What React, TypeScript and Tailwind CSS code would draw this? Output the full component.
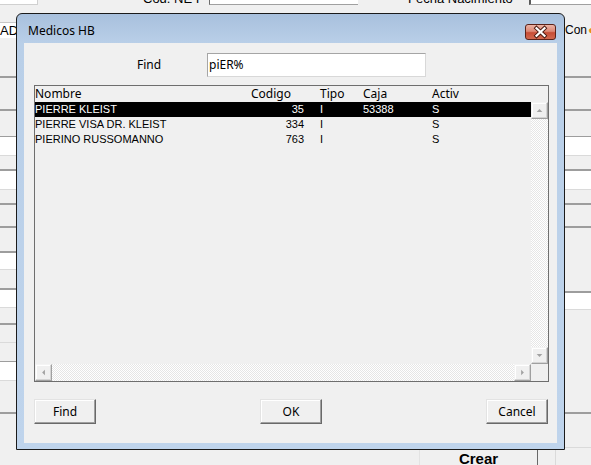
import React from "react";

type Seg = [string, number];

const segClass: Record<string, string> = {
  g: "bg-[#f0f0f0]",
  d: "bg-[#9d9d9d]",
  l: "bg-[#dadada]",
  w: "bg-white",
};

const leftSegs: Seg[] = [
  ["g", 38], ["d", 2], ["g", 31], ["d", 2], ["g", 25], ["d", 1], ["w", 18], ["l", 1],
  ["g", 13], ["d", 2], ["w", 18], ["l", 1], ["g", 13], ["d", 2], ["g", 21], ["d", 2],
  ["g", 23], ["d", 2], ["w", 16], ["l", 1], ["g", 18], ["d", 2], ["w", 17], ["l", 1],
  ["g", 15], ["d", 2], ["g", 17], ["l", 1], ["g", 18], ["d", 1], ["w", 18], ["l", 1],
  ["g", 31], ["d", 2],
];

const rightSegs: Seg[] = [
  ["g", 38], ["d", 2], ["g", 31], ["d", 2], ["g", 25], ["d", 1], ["w", 18], ["l", 1],
  ["g", 13], ["d", 2], ["w", 18], ["l", 1], ["g", 13], ["d", 2], ["g", 21], ["d", 2],
  ["g", 63], ["d", 2], ["w", 16], ["l", 1], ["g", 102], ["d", 2], ["g", 33], ["l", 1],
];

function Segs({ segs }: { segs: Seg[] }) {
  return (
    <>
      {segs.map(([t, h], i) => (
        <div key={i} className={`shrink-0 ${segClass[t]}`} style={{ height: h }} />
      ))}
    </>
  );
}

function Arrow({ dir }: { dir: "up" | "down" | "left" | "right" }) {
  const pts: Record<string, string> = {
    up: "5,9.5 8,6.5 11,9.5",
    down: "5,6.5 8,9.5 11,6.5",
    left: "9.5,5 6.5,8 9.5,11",
    right: "6.5,5 9.5,8 6.5,11",
  };
  return (
    <div className="w-[17px] h-[17px] shrink-0 bg-[#f0f0f0] border border-t-[#f4f4f4] border-l-[#f4f4f4] border-r-[#a0a0a0] border-b-[#a0a0a0] shadow-[inset_-1px_-1px_0_#d4d4d4,inset_1px_1px_0_#ffffff] flex items-center justify-center">
      <svg width="15" height="15" viewBox="0 0 16 16">
        <polygon points={pts[dir]} fill="#a2a2a2" />
      </svg>
    </div>
  );
}

const track =
  "bg-[image:repeating-conic-gradient(#ffffff_0_25%,#e6e6e6_0_50%)] bg-[length:2px_2px]";

const rows = [
  { name: "PIERRE KLEIST", code: "35", tipo: "I", caja: "53388", act: "S", sel: true },
  { name: "PIERRE VISA DR. KLEIST", code: "334", tipo: "I", caja: "", act: "S", sel: false },
  { name: "PIERINO RUSSOMANNO", code: "763", tipo: "I", caja: "", act: "S", sel: false },
];

function WinButton({ label }: { label: string }) {
  return (
    <div className="w-[62px] h-[25px] bg-[#f0f0f0] border border-t-[#e3e3e3] border-l-[#e3e3e3] border-r-[#696969] border-b-[#696969] shadow-[inset_-1px_-1px_0_#a0a0a0,inset_1px_1px_0_#ffffff] text-[12px] font-['Noto_Sans',sans-serif] flex items-center justify-center">
      {label}
    </div>
  );
}

export default function App() {
  return (
    <div className="relative w-[591px] h-[465px] overflow-hidden bg-[#f0f0f0] text-black font-['Liberation_Sans',Arial,sans-serif]">
      {/* background form */}
      <div className="flex flex-col h-full">
        {/* top strip */}
        <div className="h-[6px] flex items-start overflow-hidden shrink-0">
          <div className="w-[38px] h-[5px] bg-white border-r border-b border-[#d0d0d0]" />
          <div className="w-[171px] pl-[105px] text-[13px] leading-[15px] -mt-[9px] whitespace-nowrap">Cod. NE I</div>
          <div className="w-[149px] h-[5px] bg-white border-l border-b border-l-[#6d6d6d] border-b-[#a0a0a0]" />
          <div className="w-[171px] pl-[50px] text-[13px] leading-[15px] -mt-[9px] whitespace-nowrap">Fecha Nacimiento</div>
          <div className="flex-1 h-[5px] bg-white border-l-2 border-b border-l-[#5a5a5a] border-b-[#a0a0a0]" />
        </div>
        {/* middle */}
        <div className="flex flex-1 min-h-0">
          <div className="w-[16px] flex flex-col overflow-hidden">
            <div className="h-[16px] shrink-0" />
            <div className="h-[16px] shrink-0 bg-white border-t border-[#c8c8c8] text-[13px] leading-[15px] whitespace-nowrap">AD</div>
            <Segs segs={leftSegs} />
            <div className="flex-1" />
          </div>
          <div className="flex-1" />
          <div className="w-[27px] flex flex-col overflow-hidden">
            <div className="h-[16px] shrink-0" />
            <div className="h-[16px] shrink-0 flex items-center text-[12px] leading-[15px] whitespace-nowrap pl-[1px]">
              Con<span className="ml-[1px] text-[#e8901c]">●</span>
            </div>
            <Segs segs={rightSegs} />
            <div className="flex-1" />
          </div>
        </div>
        {/* bottom strip */}
        <div className="h-[15px] flex shrink-0">
          <div className="w-[419px]" />
          <div className="w-[119px] border-l border-r border-l-[#e3e3e3] border-r-[#696969] flex justify-center text-[15px] leading-[17px] font-bold">Crear</div>
          <div className="w-[17px]" />
          <div className="w-[1px] bg-[#dadada]" />
          <div className="flex-1" />
        </div>
      </div>

      {/* dialog */}
      <div className="absolute left-[16px] top-[13px] w-[549px] h-[437px] rounded-t-[6px] border border-[#1b1b1b] bg-[linear-gradient(180deg,#a8c0dd_0px,#b9cfe8_29px,#bfd4ec_100%)] flex flex-col px-[7px] pb-[6px]">
        <div className="h-[29px] flex items-start shrink-0">
          <span className="pt-[10px] pl-[4px] text-[12px] leading-[14px] font-['Noto_Sans',sans-serif]">Medicos HB</span>
          <div className="ml-auto mr-[1px] mt-[10px] w-[31px] h-[16px] rounded-[3px] border border-[#5b2219] bg-[linear-gradient(180deg,#ebb3a6_0%,#dd8774_45%,#c74d36_55%,#d2684f_100%)] flex items-center justify-center">
            <svg width="29" height="14" viewBox="0 0 29 14">
              <path d="M10.5 3.2 L18.5 10.8 M18.5 3.2 L10.5 10.8" stroke="#4a1a12" strokeWidth="4" strokeLinecap="square" />
              <path d="M10.5 3.2 L18.5 10.8 M18.5 3.2 L10.5 10.8" stroke="#ffffff" strokeWidth="2.2" strokeLinecap="square" />
            </svg>
          </div>
        </div>
        <div className="flex-1 bg-[#f0f0f0] flex flex-col pt-[10px] pl-[10px]">
          {/* find row */}
          <div className="flex items-center h-[24px]">
            <div className="w-[173px] pl-[103px] text-[12px] font-['Noto_Sans',sans-serif]">Find</div>
            <div className="w-[219px] h-[24px] bg-white border border-[#d8d8d8] border-t-[#a5a5a5] border-l-[#a5a5a5] flex items-center pl-[1px] text-[12px] font-['Noto_Sans',sans-serif]">
              piER%
            </div>
          </div>
          {/* list */}
          <div className="mt-[8px] w-[515px] h-[297px] border border-[#6e6e6e] bg-[#f0f0f0] flex flex-col">
            <div className="h-[16px] grid grid-cols-[216px_69px_43px_69px_1fr] items-center text-[12px] leading-[16px] font-['Noto_Sans',sans-serif] shrink-0">
              <span>Nombre</span>
              <span>Codigo</span>
              <span>Tipo</span>
              <span>Caja</span>
              <span>Activ</span>
            </div>
            <div className="h-[262px] flex shrink-0">
              <div className="flex-1 flex flex-col text-[11px] leading-[15px]">
                {rows.map((r) => (
                  <div
                    key={r.name}
                    className={`h-[15px] grid grid-cols-[216px_69px_43px_69px_1fr] ${r.sel ? "bg-black text-white" : ""}`}
                  >
                    <span className="whitespace-nowrap">{r.name}</span>
                    <span className="text-right pr-[16px]">{r.code}</span>
                    <span>{r.tipo}</span>
                    <span>{r.caja}</span>
                    <span>{r.act}</span>
                  </div>
                ))}
              </div>
              <div className="w-[17px] flex flex-col">
                <Arrow dir="up" />
                <div className={`flex-1 ${track}`} />
                <Arrow dir="down" />
              </div>
            </div>
            <div className="h-[17px] flex shrink-0">
              <Arrow dir="left" />
              <div className={`flex-1 ${track}`} />
              <Arrow dir="right" />
              <div className="w-[17px] bg-[#f0f0f0]" />
            </div>
          </div>
          {/* buttons */}
          <div className="mt-[17px] w-[514px] flex justify-between">
            <WinButton label="Find" />
            <WinButton label="OK" />
            <WinButton label="Cancel" />
          </div>
        </div>
      </div>
    </div>
  );
}
